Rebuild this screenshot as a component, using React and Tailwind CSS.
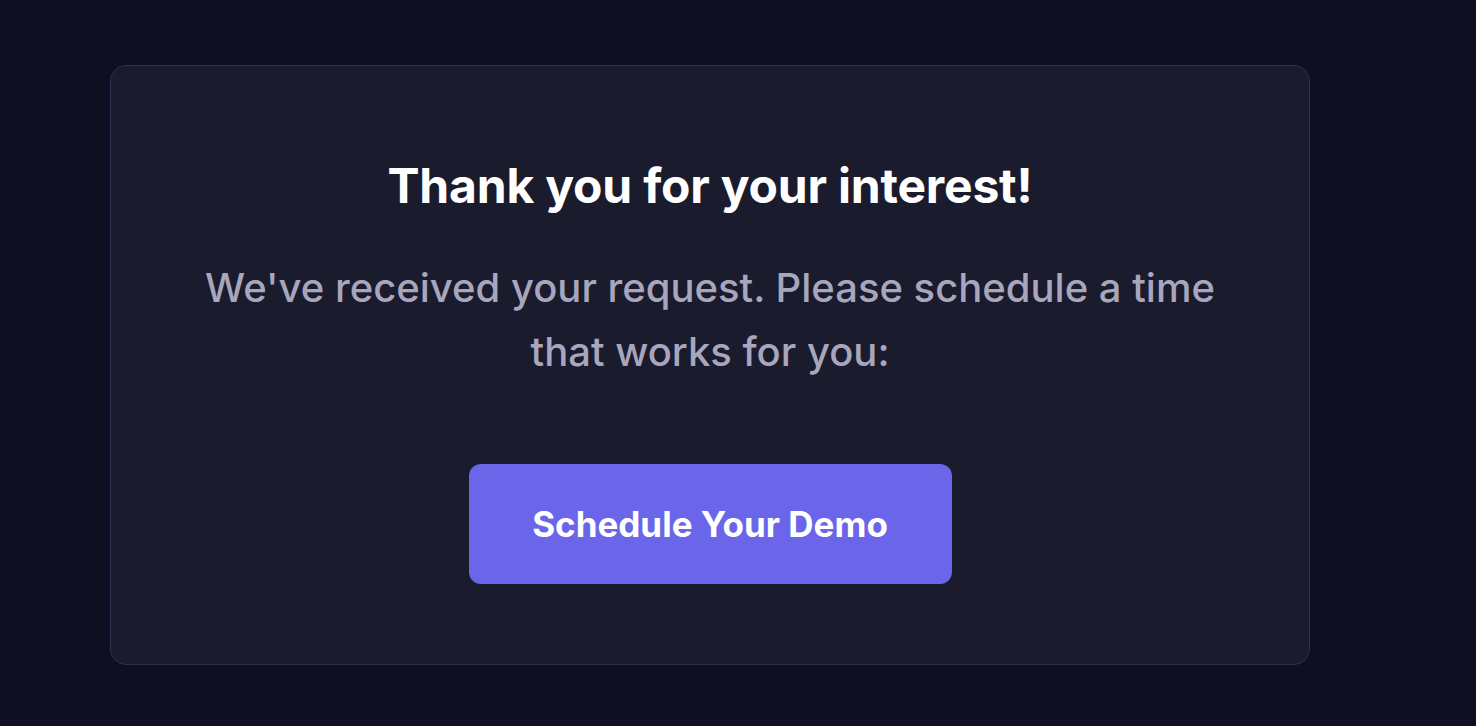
export default function App() {
  return (
    <div
      className="min-h-screen w-full bg-[#0e0f21] pt-[65px] pl-[110px]"
      style={{ fontFamily: "Inter, 'Noto Sans', sans-serif" }}
    >
      <div className="box-border flex h-[600px] w-[1200px] flex-col items-center rounded-2xl border border-[#2f2e4e] bg-[#1b1b2e] px-20 pt-[90px] text-center">
        <h1 className="text-[48px] font-bold leading-[60px] tracking-[-0.2px] text-white">
          Thank you for your interest!
        </h1>
        <p className="mt-10 max-w-[1040px] text-[40px] font-medium leading-[64px] text-[#a8a6bd]">
          We've received your request. Please schedule a time that works for you:
        </p>
        <button className="mt-20 flex h-[120px] w-[483px] items-center justify-center rounded-xl bg-[#6b66e9] text-[35px] font-bold text-white">
          Schedule Your Demo
        </button>
      </div>
    </div>
  );
}
